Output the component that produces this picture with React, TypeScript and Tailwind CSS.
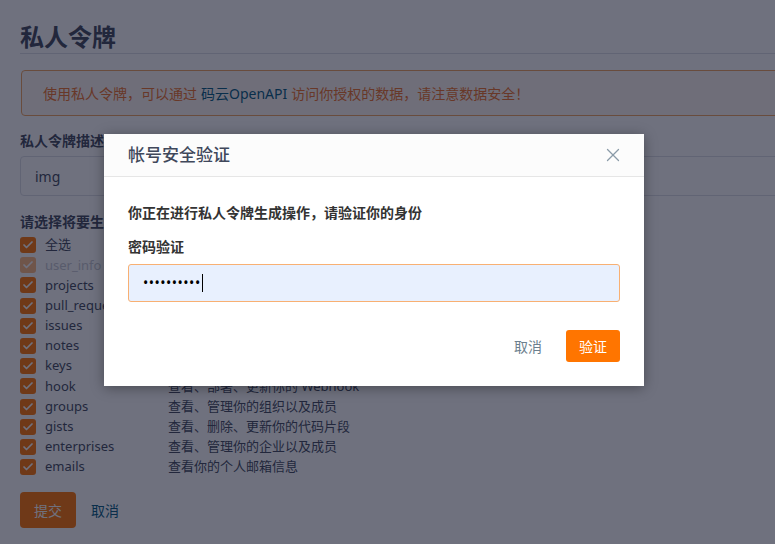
import { X, Check } from 'lucide-react';

const scopes = [
  { name: '全选', desc: '' },
  { name: 'user_info', desc: '', disabled: true },
  { name: 'projects', desc: '' },
  { name: 'pull_requests', desc: '' },
  { name: 'issues', desc: '' },
  { name: 'notes', desc: '' },
  { name: 'keys', desc: '' },
  { name: 'hook', desc: '查看、部署、更新你的 Webhook' },
  { name: 'groups', desc: '查看、管理你的组织以及成员' },
  { name: 'gists', desc: '查看、删除、更新你的代码片段' },
  { name: 'enterprises', desc: '查看、管理你的企业以及成员' },
  { name: 'emails', desc: '查看你的个人邮箱信息' },
];

function TokenPage() {
  return (
    <div className="w-[900px] pl-5 pt-[20px]">
      <h1 className="text-[24px] font-bold leading-[33px] text-[#40485b] border-b border-[#dcdfe6]">私人令牌</h1>

      <div className="mt-4 h-[46px] flex items-center pl-[21px] ml-px border border-[#f0a35e] rounded bg-[#fff8f2] text-[14px] text-[#ee7028]">
        使用私人令牌，可以通过 <span className="text-[#005980] mx-1">码云OpenAPI</span> 访问你授权的数据，请注意数据安全！
      </div>

      <div className="mt-[15px] text-[14px] font-bold text-[#40485b] leading-5">私人令牌描述</div>
      <div className="mt-[5px] h-10 border border-[#dcdfe6] rounded flex items-center pl-[14px] text-[14px] text-[#40485b]">img</div>

      <div className="mt-4 text-[14px] font-bold text-[#40485b] leading-5">请选择将要生成私人令牌所拥有的权限</div>
      <div className="mt-[3px] flex flex-col">
        {scopes.map((s) => (
          <div key={s.name} className={`h-[20.2px] flex items-center text-[13px] ${s.disabled ? 'opacity-50' : ''}`}>
            <span className="w-4 h-4 rounded-[3px] bg-[#fe7300] flex items-center justify-center">
              <Check size={12} strokeWidth={3.5} className="text-white" />
            </span>
            <span className={`ml-[9px] w-[123px] ${s.disabled ? 'text-[#8c92a4]' : 'text-[#40485b]'}`}>{s.name}</span>
            <span className="text-[#40485b]">{s.desc}</span>
          </div>
        ))}
      </div>

      <div className="mt-[15px] flex items-center">
        <button className="w-14 h-9 rounded bg-[#fe7300] text-white text-[14px]">提交</button>
        <button className="ml-[15px] text-[14px] text-[#005980]">取消</button>
      </div>
    </div>
  );
}

function VerifyModal() {
  return (
    <div className="absolute left-[104px] top-[134px] w-[540px] bg-white shadow-[0_2px_12px_rgba(0,0,0,0.35)]">
      <div className="h-[43px] bg-[#fcfcfc] border-b border-[#e6e6e6] flex items-center justify-between pl-6 pr-[20px]">
        <span className="text-[17px] font-medium text-[#40485b]">帐号安全验证</span>
        <X size={22} strokeWidth={1.4} className="text-[#8a9ba8]" />
      </div>
      <div className="px-6 pt-[26px] pb-6">
        <div className="text-[14px] font-semibold text-[#333] leading-5">你正在进行私人令牌生成操作，请验证你的身份</div>
        <div className="mt-[14px] text-[14px] font-semibold text-[#333] leading-5">密码验证</div>
        <div className="mt-[7px] h-[38px] rounded-[3px] border border-[#f8b073] bg-[#e8f0fe] flex items-center pl-[14px]">
          <span className="text-[14px] tracking-[0.5px] text-black leading-none">••••••••••</span>
          <span className="ml-px w-px h-[18px] bg-black" />
        </div>
        <div className="mt-7 flex items-center justify-end">
          <button className="text-[14px] text-[#6c7f8e] mr-6">取消</button>
          <button className="w-[54px] h-8 rounded-[3px] bg-[#ff7500] text-white text-[14px]">验证</button>
        </div>
      </div>
    </div>
  );
}

export default function App() {
  return (
    <div
      className="relative w-[775px] h-[544px] overflow-hidden bg-white"
      style={{ fontFamily: '"Noto Sans", "Noto Sans CJK SC", sans-serif' }}
    >
      <TokenPage />
      <div className="absolute inset-0 bg-[rgba(15,18,40,0.6)]" />
      <VerifyModal />
    </div>
  );
}
